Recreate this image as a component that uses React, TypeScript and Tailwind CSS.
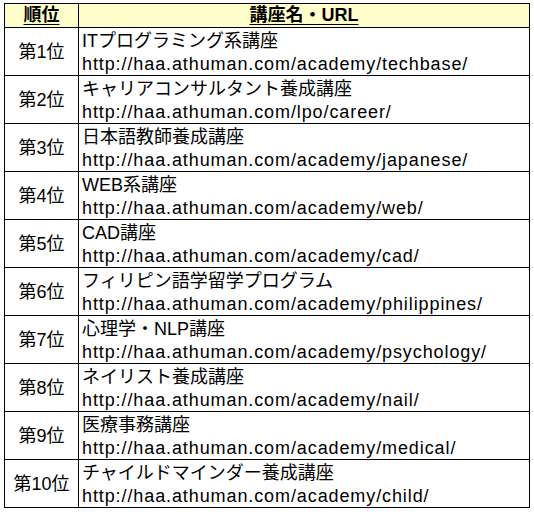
// ─── Course Ranking Table ─────────────────────────────────────────────────────

const rows = [
  { rank: "第1位", name: "ITプログラミング系講座", url: "http://haa.athuman.com/academy/techbase/" },
  { rank: "第2位", name: "キャリアコンサルタント養成講座", url: "http://haa.athuman.com/lpo/career/" },
  { rank: "第3位", name: "日本語教師養成講座", url: "http://haa.athuman.com/academy/japanese/" },
  { rank: "第4位", name: "WEB系講座", url: "http://haa.athuman.com/academy/web/" },
  { rank: "第5位", name: "CAD講座", url: "http://haa.athuman.com/academy/cad/" },
  { rank: "第6位", name: "フィリピン語学留学プログラム", url: "http://haa.athuman.com/academy/philippines/" },
  { rank: "第7位", name: "心理学・NLP講座", url: "http://haa.athuman.com/academy/psychology/" },
  { rank: "第8位", name: "ネイリスト養成講座", url: "http://haa.athuman.com/academy/nail/" },
  { rank: "第9位", name: "医療事務講座", url: "http://haa.athuman.com/academy/medical/" },
  { rank: "第10位", name: "チャイルドマインダー養成講座", url: "http://haa.athuman.com/academy/child/" },
];

export default function App() {
  return (
    <div
      className="min-h-[514px] bg-white pl-[4px] pt-[3px] text-black"
      style={{ fontFamily: '"Liberation Sans", "Noto Sans CJK JP", sans-serif' }}
    >
      <div className="grid w-[526px] grid-cols-[74px_1fr] border-l border-t border-black text-[18px]">
        {/* Header */}
        <div className="flex h-[24px] items-center justify-center border-b border-r border-black bg-[#ffffcc] font-bold leading-[23px]">
          <span className="underline decoration-1 underline-offset-[3px]">順位</span>
        </div>
        <div className="flex h-[24px] items-center justify-center border-b border-r border-black bg-[#ffffcc] font-bold leading-[23px]">
          <span className="underline decoration-1 underline-offset-[3px]">講座名・URL</span>
        </div>

        {/* Rows */}
        {rows.map((r) => (
          <div key={r.rank} className="contents">
            <div className="flex h-[48px] items-center justify-center border-b border-r border-black pt-[1px]">
              {r.rank}
            </div>
            <div className="h-[48px] border-b border-r border-black pl-[3px] pt-[2px] leading-[23px]">
              <div className="whitespace-nowrap">{r.name}</div>
              <div className="whitespace-nowrap tracking-[0.9px]">{r.url}</div>
            </div>
          </div>
        ))}
      </div>
    </div>
  );
}
